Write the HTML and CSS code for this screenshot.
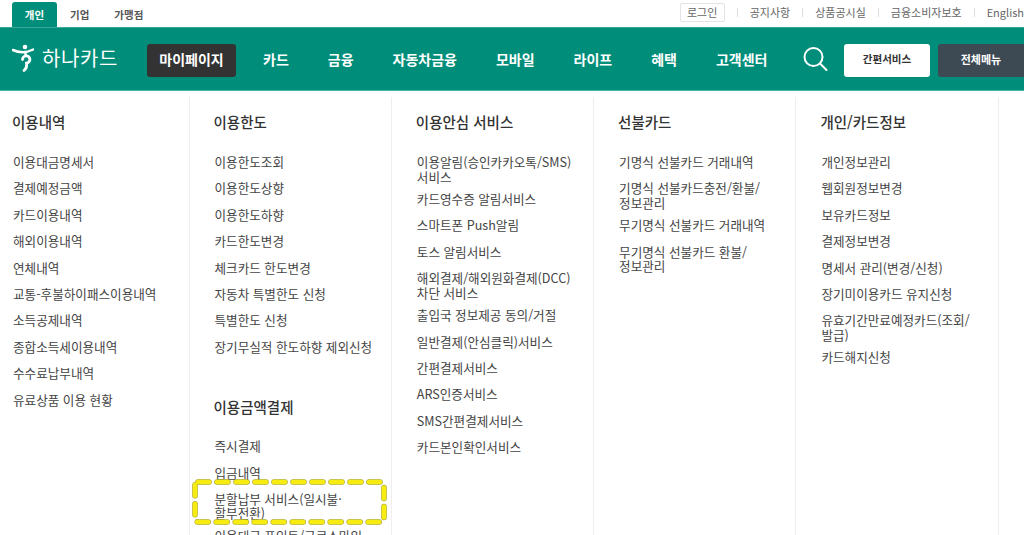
FILE: index.html
```html
<!DOCTYPE html>
<html lang="ko">
<head>
<meta charset="utf-8">
<title>하나카드 마이페이지</title>
<link rel="stylesheet" href="styles.css">
</head>
<body>
<div class="page">
  <div class="topbar">
    <ul class="tabs">
      <li class="tab tab-on">개인</li>
      <li class="tab tab-biz">기업</li>
      <li class="tab tab-shop">가맹점</li>
    </ul>
    <div class="util">
      <span class="login">로그인</span>
      <span class="util-link">공지사항</span>
      <span class="util-link">상품공시실</span>
      <span class="util-link">금융소비자보호</span>
      <span class="util-link util-en">English</span>
    </div>
  </div>
  <header class="header">
    <div class="logo">
      <svg class="logo-mark" width="22" height="28" viewBox="0 0 22 28" aria-hidden="true">
        <circle cx="13" cy="3" r="2.300" fill="#fff"/>
        <path d="M0.800 6 Q11 10.500 21.200 5.500" fill="none" stroke="#fff" stroke-width="2.500" stroke-linecap="round"/>
        <path d="M13.500 8 V12" stroke="#fff" stroke-width="2.400"/>
        <path d="M10.500 15.500 A3.700 3.700 0 1 1 14.500 19.200 C15 22 14 25 12 26.500" fill="none" stroke="#fff" stroke-width="2.800" stroke-linecap="round"/>
      </svg>
      <span class="logo-text">하나카드</span>
    </div>
    <nav class="nav">
      <a class="nav-on">마이페이지</a>
      <a>카드</a>
      <a>금융</a>
      <a>자동차금융</a>
      <a>모바일</a>
      <a>라이프</a>
      <a>혜택</a>
      <a>고객센터</a>
    </nav>
    <svg class="search" width="26" height="26" viewBox="0 0 26 26" aria-hidden="true">
      <circle cx="11.500" cy="11" r="9" fill="none" stroke="#fff" stroke-width="2"/>
      <path d="M18 17.500 L24.500 24" stroke="#fff" stroke-width="2" stroke-linecap="round"/>
    </svg>
    <a class="btn btn-easy">간편서비스</a>
    <a class="btn btn-all">전체메뉴</a>
  </header>
  <main class="columns">
    <section class="col col-first">
      <h2>이용내역</h2>
      <ul>
        <li>이용대금명세서</li>
        <li>결제예정금액</li>
        <li>카드이용내역</li>
        <li>해외이용내역</li>
        <li>연체내역</li>
        <li>교통-후불하이패스이용내역</li>
        <li>소득공제내역</li>
        <li>종합소득세이용내역</li>
        <li>수수료납부내역</li>
        <li>유료상품 이용 현황</li>
      </ul>
    </section>
    <section class="col">
      <h2>이용한도</h2>
      <ul>
        <li>이용한도조회</li>
        <li>이용한도상향</li>
        <li>이용한도하향</li>
        <li>카드한도변경</li>
        <li>체크카드 한도변경</li>
        <li>자동차 특별한도 신청</li>
        <li>특별한도 신청</li>
        <li>장기무실적 한도하향 제외신청</li>
      </ul>
      <h2 class="sub-head">이용금액결제</h2>
      <ul>
        <li>즉시결제</li>
        <li>입금내역</li>
        <li>분할납부 서비스(일시불·<br>할부전환)</li>
        <li>이용대금 포인트/글로스마일</li>
      </ul>
    </section>
    <section class="col">
      <h2>이용안심 서비스</h2>
      <ul>
        <li>이용알림(승인카카오톡/SMS)<br>서비스</li>
        <li>카드영수증 알림서비스</li>
        <li>스마트폰 Push알림</li>
        <li>토스 알림서비스</li>
        <li>해외결제/해외원화결제(DCC)<br>차단 서비스</li>
        <li>출입국 정보제공 동의/거절</li>
        <li>일반결제(안심클릭)서비스</li>
        <li>간편결제서비스</li>
        <li>ARS인증서비스</li>
        <li>SMS간편결제서비스</li>
        <li>카드본인확인서비스</li>
      </ul>
    </section>
    <section class="col">
      <h2>선불카드</h2>
      <ul>
        <li>기명식 선불카드 거래내역</li>
        <li>기명식 선불카드충전/환불/<br>정보관리</li>
        <li>무기명식 선불카드 거래내역</li>
        <li>무기명식 선불카드 환불/<br>정보관리</li>
      </ul>
    </section>
    <section class="col">
      <h2>개인/카드정보</h2>
      <ul>
        <li>개인정보관리</li>
        <li>웹회원정보변경</li>
        <li>보유카드정보</li>
        <li>결제정보변경</li>
        <li>명세서 관리(변경/신청)</li>
        <li>장기미이용카드 유지신청</li>
        <li>유효기간만료예정카드(조회/<br>발급)</li>
        <li>카드해지신청</li>
      </ul>
    </section>
  </main>
  <svg class="highlight" width="200" height="48" viewBox="0 0 200 48" aria-hidden="true">
    <rect class="hl-edge" x="4" y="4" width="189" height="40" rx="3"/>
    <rect class="hl-fill" x="4" y="4" width="189" height="40" rx="3"/>
  </svg>
</div>
</body>
</html>
```

FILE: styles.css
```css
* { box-sizing: border-box; }
html, body { margin: 0; padding: 0; background: #fff; }
body { font-family: "Noto Sans CJK KR", "Noto Sans", sans-serif; color: #444; }
ul { list-style: none; margin: 0; padding: 0; }
a { display: block; }

.page { position: relative; width: 1024px; height: 535px; overflow: hidden; }

.topbar { display: flex; align-items: flex-end; height: 27px; padding-left: 12px; }
.tabs { display: flex; align-items: flex-end; height: 25px; }
.tab { font-size: 10.500px; font-weight: 700; color: #555; line-height: 25px; }
.tab-on { width: 45px; text-align: center; color: #fff; background: #008e7b; border-radius: 3px 3px 0 0; }
.tab-biz { margin-left: 13px; padding-right: 12px; }
.tab-shop { margin-left: 13px; }

.util { display: flex; align-items: center; margin-left: auto; height: 27px; padding-bottom: 3px; font-size: 11px; color: #666; white-space: nowrap; }
.login { width: 45px; height: 19px; line-height: 17px; text-align: center; border: 1px solid #e4e4e4; border-radius: 2px; margin-right: 25px; }
.util-link { position: relative; margin-right: 25px; }
.util-link::before { content: ""; position: absolute; left: -13px; top: 4px; height: 9px; width: 1px; background: #ddd; }
.util-en { margin-right: 0; }

.header { display: flex; align-items: center; height: 64px; background: #008e7b; border-top: 1px solid #3aa898; border-bottom: 1px solid #3fb5a3; }
.logo { display: flex; align-items: center; width: 147px; padding-left: 12px; flex: none; color: #fff; }
.logo-mark { flex: none; margin-top: -2px; }
.logo-text { margin-left: 8px; font-size: 20px; letter-spacing: 0.6px; line-height: 26px; margin-top: -3px; }

.nav { display: flex; align-items: center; font-size: 14px; font-weight: 700; color: #fff; gap: 39px; white-space: nowrap; flex: none; width: 656px; }
.nav-on { width: 89px; height: 33px; margin-top: 2px; line-height: 30px; text-align: center; background: #333; border-radius: 3px; margin-right: -12px; }

.search { flex: none; margin-left: -1px; }
.btn { flex: none; height: 33px; margin-top: 2px; line-height: 30px; text-align: center; font-size: 10.500px; font-weight: 700; border-radius: 3px; }
.btn-easy { width: 86px; margin-left: 16px; background: #fff; color: #333; }
.btn-all { width: 86px; margin-left: 8px; font-size: 11px; background: #3d4a54; color: #fff; border-radius: 3px 0 0 3px; }

.columns { display: flex; padding-top: 6px; height: 444px; }
.col { width: 202.300px; flex: none; padding: 15px 0 0 24px; border-right: 1px solid #eee; font-size: 12.600px; }
.col-first { width: 189.500px; padding-left: 12px; }
.col h2 { margin: 0 0 23px; height: 20px; font-size: 14.500px; line-height: 20px; font-weight: 500; color: #333; }
.col ul { margin-left: 1px; }
.col li { min-height: 26.400px; padding-bottom: 8px; line-height: 14.500px; white-space: nowrap; }
.col .sub-head { margin-top: 31px; margin-bottom: 22px; }

.highlight { position: absolute; left: 191px; top: 478px; }
.highlight rect { fill: none; stroke-linecap: round; stroke-dasharray: 11 8; }
.hl-edge { stroke: #a3a12a; stroke-width: 5.500; }
.hl-fill { stroke: #f6ec12; stroke-width: 4.500; }
```
